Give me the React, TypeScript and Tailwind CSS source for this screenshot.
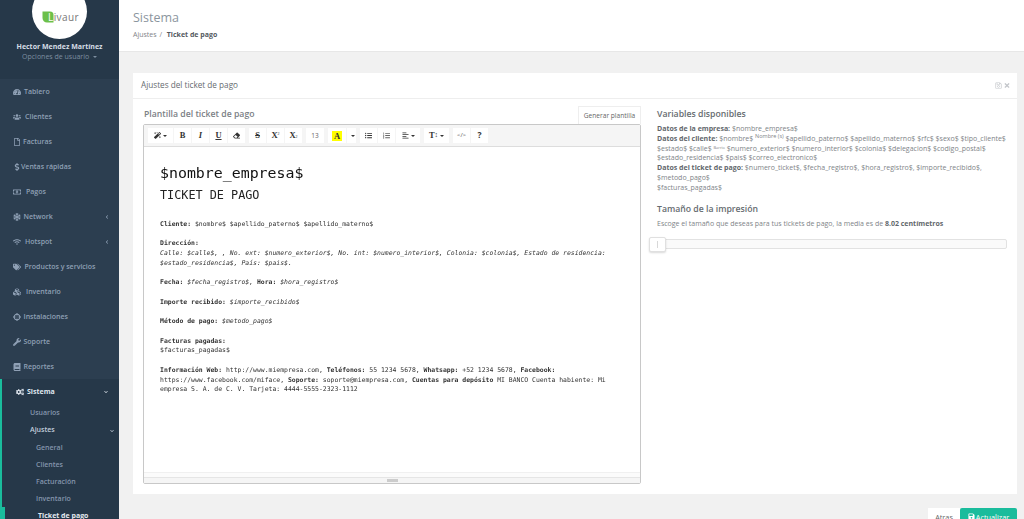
import React from "react";
import { FaTachometerAlt, FaUsers, FaRegFile, FaDollarSign, FaRegMoneyBillAlt, FaSnowflake, FaWifi, FaTags, FaCubes, FaCrosshairs, FaWrench, FaBook, FaCogs, FaMagic, FaEraser, FaListUl, FaListOl, FaAlignLeft, FaSave, FaTimes, FaChevronLeft, FaChevronDown, FaRegSave } from "react-icons/fa";

const items: [string, React.ComponentType<{ className?: string }>, boolean, string][] = [
  ["Tablero", FaTachometerAlt, false, "w-[11px]"],
  ["Clientes", FaUsers, false, "w-[12px]"],
  ["Facturas", FaRegFile, false, "w-[10px]"],
  ["Ventas rápidas", FaDollarSign, false, "w-[8px]"],
  ["Pagos", FaRegMoneyBillAlt, false, "w-[13px]"],
  ["Network", FaSnowflake, true, "w-[10.5px]"],
  ["Hotspot", FaWifi, true, "w-[12px]"],
  ["Productos y servicios", FaTags, false, "w-[11.5px]"],
  ["Inventario", FaCubes, false, "w-[13px]"],
  ["Instalaciones", FaCrosshairs, false, "w-[10.5px]"],
  ["Soporte", FaWrench, false, "w-[10.5px]"],
  ["Reportes", FaBook, false, "w-[10.5px]"],
];

function Caret() {
  return <span className="inline-block ml-[2px] align-middle w-0 h-0 border-x-[2px] border-x-transparent border-t-[2px] border-t-current" />;
}

function TB({ children, w = "w-[17px]" }: { children: React.ReactNode; w?: string }) {
  return <span className={`${w} h-[15px] flex items-center justify-center bg-white text-[#333] text-[8.5px] font-bold font-['Liberation_Serif',serif]`}>{children}</span>;
}

function Group({ children, mr = "mr-[4px]" }: { children: React.ReactNode; mr?: string }) {
  return <div className={`flex gap-[1px] ${mr}`}>{children}</div>;
}

export default function App() {
  return (
    <div className="flex h-[519px] w-[1024px] overflow-hidden bg-[#f1f1f1] font-['Open_Sans',sans-serif]">
      <aside className="w-[119px] shrink-0 bg-[#2c3e50] flex flex-col">
        <div className="h-[79px] bg-[#263849] flex flex-col items-center shrink-0">
          <div className="w-[55px] h-[55px] -mt-[16px] rounded-full bg-white flex items-center justify-center shrink-0">
            <div className="flex items-center mt-[11px] ml-[2px]">
              <svg width="12" height="12" viewBox="0 0 12 12"><path d="M0.5 0.5 H8 C10.5 0.5 11.5 2 11.5 4 V11.5 H5 C2.5 11.5 0.5 9.5 0.5 7 Z" fill="#6cc04a" /></svg>
              <span className="text-[10px] leading-none text-[#777] -ml-[6px] tracking-[0.4px]"><span className="text-white">L</span>ivaur</span>
            </div>
          </div>
          <div className="mt-[2px] text-[7px] leading-[11px] font-bold text-[#d5dde5] whitespace-nowrap">Hector Mendez Martínez</div>
          <div className="text-[7px] leading-[10px] text-[#7d8ea0] whitespace-nowrap">Opciones de usuario <Caret /></div>
        </div>
        <nav className="flex flex-col grow">
          {items.map(([label, Icon, chev, w]) => (
            <div key={label} className="h-[25px] flex items-center pl-[13px] pr-[10px] text-[7px] font-semibold text-[#8fa0b5]">
              <span className={`${w} shrink-0`}><Icon className="w-[8px] h-[8px]" /></span>
              <span className="flex-1 whitespace-nowrap pt-[2px]">{label}</span>
              {chev && <FaChevronLeft className="w-[4px] h-[4px]" />}
            </div>
          ))}
          <div className="border-l-2 border-[#1abc9c] bg-[#263849] grow">
            <div className="h-[25px] flex items-center pl-[14px] pr-[11px] text-[7px] font-bold text-[#dfe6ee]">
              <span className="w-[11px] shrink-0"><FaCogs className="w-[8px] h-[8px]" /></span>
              <span className="flex-1 pt-[1px]">Sistema</span>
              <FaChevronDown className="w-[4px] h-[4px]" />
            </div>
            <div className="flex flex-col text-[7px] font-semibold text-[#8495ac]">
              <div className="h-[17px] flex items-center pl-[28px] pt-[1px]">Usuarios</div>
              <div className="h-[18px] flex items-center pl-[28px] pr-[5px] pt-[1px] text-[#c3cedb]"><span className="flex-1">Ajustes</span><FaChevronDown className="w-[4px] h-[4px]" /></div>
              <div className="h-[17px] flex items-center pl-[34px] pt-[1px]">General</div>
              <div className="h-[17px] flex items-center pl-[34px] pt-[1px]">Clientes</div>
              <div className="h-[17px] flex items-center pl-[34px] pt-[1px]">Facturación</div>
              <div className="h-[17px] flex items-center pl-[34px] pt-[1px]">Inventario</div>
              <div className="h-[18px] flex items-center pl-[33px] pt-[1px] font-bold text-[#e3e9f0] border-l-[5px] -ml-[2px] border-[#1abc9c] whitespace-nowrap">Ticket de pago</div>
            </div>
          </div>
        </nav>
      </aside>
      <main className="flex-1 flex flex-col min-w-0">
        <header className="h-[52px] shrink-0 bg-white border-b border-[#e7e7e7] pl-[14px] pt-[9px]">
          <div className="text-[12.5px] leading-[18px] text-[#8b959e]">Sistema</div>
          <div className="text-[7px] leading-[10px] mt-[3px] text-[#7f8488]">Ajustes <span className="mx-[1px]">/</span> <b className="text-[#555a5f] ml-[2px]">Ticket de pago</b></div>
        </header>
        <section className="mt-[21px] ml-[14px] mr-[7px] h-[421px] bg-white flex flex-col shrink-0">
          <div className="h-[26px] shrink-0 border-b border-[#eeeeee] flex items-center justify-between pl-[8px] pr-[7px] text-[8.2px] text-[#666b70]">
            <span>Ajustes del ticket de pago</span>
            <span className="flex gap-[2px] text-[#c4c7cb]"><FaRegSave className="w-[7px] h-[7px]" /><FaTimes className="w-[6px] h-[7px]" /></span>
          </div>
          <div className="flex flex-1 pl-[10px] min-h-0">
            <div className="w-[498px] shrink-0 flex flex-col pb-[10px]">
              <div className="flex items-end justify-between h-[25px] shrink-0">
                <span className="text-[8.7px] leading-[18px] font-semibold text-[#7b8085] ml-[1px] self-center mt-[5px]">Plantilla del ticket de pago</span>
                <span className="h-[18px] w-[63px] border border-[#eee] border-b-0 text-[6.6px] text-[#666] flex items-center justify-center">Generar plantilla</span>
              </div>
              <div className="flex-1 flex flex-col border border-[#c8c8c8] rounded-[2px] min-h-0">
                <div className="h-[22px] shrink-0 bg-[#f5f5f5] border-b border-[#dddddd] flex items-center pl-[4px]">
                  <Group mr="mr-[1px]"><TB w="w-[25px]"><FaMagic className="w-[7px] h-[7px]" /><Caret /></TB></Group>
                  <Group><TB>B</TB><TB><i>I</i></TB><TB><u>U</u></TB><TB><FaEraser className="w-[7px] h-[7px]" /></TB></Group>
                  <Group><TB><s>S</s></TB><TB>X<sup className="text-[4px] font-normal">2</sup></TB><TB>X<sub className="text-[4px] font-normal">2</sub></TB></Group>
                  <Group><TB w="w-[18px]"><span className="text-[#666] font-normal text-[6.5px] font-['Open_Sans',sans-serif]">13</span></TB></Group>
                  <Group><TB w="w-[18px]"><span className="bg-[#ffff00] px-[2px] text-[8.5px] leading-[10px]">A</span></TB><TB w="w-[9px]"><Caret /></TB></Group>
                  <Group><TB><FaListUl className="w-[7px] h-[7px]" /></TB><TB><FaListOl className="w-[7px] h-[7px] text-[#666]" /></TB><TB w="w-[24px]"><FaAlignLeft className="w-[7px] h-[7px]" /><Caret /></TB></Group>
                  <Group><TB w="w-[25px]">T<span className="text-[7px]">↕</span><Caret /></TB></Group>
                  <Group><TB><span className="text-[6px] font-normal text-[#555] font-['Open_Sans',sans-serif]">&lt;/&gt;</span></TB><TB><span className="font-['Open_Sans',sans-serif]">?</span></TB></Group>
                </div>
                <div className="flex-1 pl-[16px] pr-[28px] pt-[15px] font-['DejaVu_Sans_Mono',monospace] text-[6.45px] leading-[9.75px] text-[#333] min-h-0 will-change-transform">
                  <div className="text-[14.9px] leading-[21px] text-[#111] mt-[1px]">$nombre_empresa$</div>
                  <div className="text-[11.8px] leading-[16px] mt-[3px] mb-[16.5px] text-[#222]">TICKET DE PAGO</div>
                  <p><b>Cliente:</b> $nombre$ $apellido_paterno$ $apellido_materno$</p>
                  <p className="mt-[9.75px]"><b>Dirección:</b><br /><i>Calle: $calle$, , No. ext: $numero_exterior$, No. int: $numero_interior$, Colonia: $colonia$, Estado de residencia: $estado_residencia$, País: $pais$.</i></p>
                  <p className="mt-[9.75px]"><b>Fecha:</b> <i>$fecha_registro$,</i> <b>Hora:</b> <i>$hora_registro$</i></p>
                  <p className="mt-[9.75px]"><b>Importe recibido:</b> <i>$importe_recibido$</i></p>
                  <p className="mt-[9.75px]"><b>Método de pago:</b> <i>$metodo_pago$</i></p>
                  <p className="mt-[9.75px]"><b>Facturas pagadas:</b><br />$facturas_pagadas$</p>
                  <p className="mt-[9.75px]"><b>Información Web:</b> http://www.miempresa.com, <b>Teléfonos:</b> 55 1234 5678, <b>Whatsapp:</b> +52 1234 5678, <b>Facebook:</b> https://www.facebook.com/miface, <b>Soporte:</b> soporte@miempresa.com, <b>Cuentas para depósito</b> MI BANCO Cuenta habiente: Mi empresa S. A. de C. V. Tarjeta: 4444-5555-2323-1112</p>
                </div>
                <div className="h-[11px] shrink-0 border-t border-[#f0f0f0] bg-[#fbfbfb] relative">
                  <div className="mt-[4px] border-t border-[#e5e5e5] h-[6px] bg-[#f5f5f5] flex justify-center"><span className="w-[11px] h-[3px] mt-[1px] bg-[#cccccc]" /></div>
                </div>
              </div>
            </div>
            <div className="flex-1 pl-[16px] pr-[10px] text-[7px] leading-[9.75px] text-[#808488] min-w-0">
              <h3 className="text-[8.7px] leading-[14px] font-semibold text-[#666b70] mt-[8px] mb-[3px]">Variables disponibles</h3>
              <p className="whitespace-nowrap"><b className="text-[#62676c]">Datos de la empresa:</b> $nombre_empresa$<br />
                <b className="text-[#62676c]">Datos del cliente:</b> $nombre$ <sup className="text-[5.5px]">Nombre (s)</sup> $apellido_paterno$ $apellido_materno$ $rfc$ $sexo$ $tipo_cliente$<br />
                $estado$ $calle$ <sup className="text-[4px]">Barrio</sup> $numero_exterior$ $numero_interior$ $colonia$ $delegacion$ $codigo_postal$<br />
                $estado_residencia$ $pais$ $correo_electronico$<br />
                <b className="text-[#62676c]">Datos del ticket de pago:</b> $numero_ticket$, $fecha_registro$, $hora_registro$, $importe_recibido$,<br />
                $metodo_pago$<br />$facturas_pagadas$</p>
              <h3 className="text-[8.7px] leading-[14px] font-semibold text-[#666b70] mt-[9.5px] mb-[3px]">Tamaño de la impresión</h3>
              <p className="whitespace-nowrap">Escoge el tamaño que deseas para tus tickets de pago, la media es de <b className="text-[#62676c]">8.02 centímetros</b></p>
              <div className="relative mt-[10px] h-[10px] rounded-[2px] bg-[#fafafa] border border-[#e2e2e2]">
                <span className="absolute -left-[9px] -top-[3px] w-[17px] h-[15px] bg-white border border-[#e0e0e0] rounded-[2px] shadow-[0_1px_2px_rgba(0,0,0,0.15)] flex items-center justify-center"><span className="w-[1px] h-[7px] bg-[#d8d8d8]" /></span>
              </div>
            </div>
          </div>
        </section>
        <div className="flex justify-end mr-[7px] mt-[13.5px] text-[7.3px] leading-[10px]">
          <span className="h-[20px] w-[32px] bg-white text-[#666] flex justify-center pt-[4px]">Atras</span>
          <span className="h-[20px] w-[57px] bg-[#1abc9c] rounded-t-[2px] text-white flex justify-center items-start pt-[4px] gap-[1px]"><FaSave className="w-[7px] h-[7px] mt-[1px]" />Actualizar</span>
        </div>
      </main>
    </div>
  );
}
